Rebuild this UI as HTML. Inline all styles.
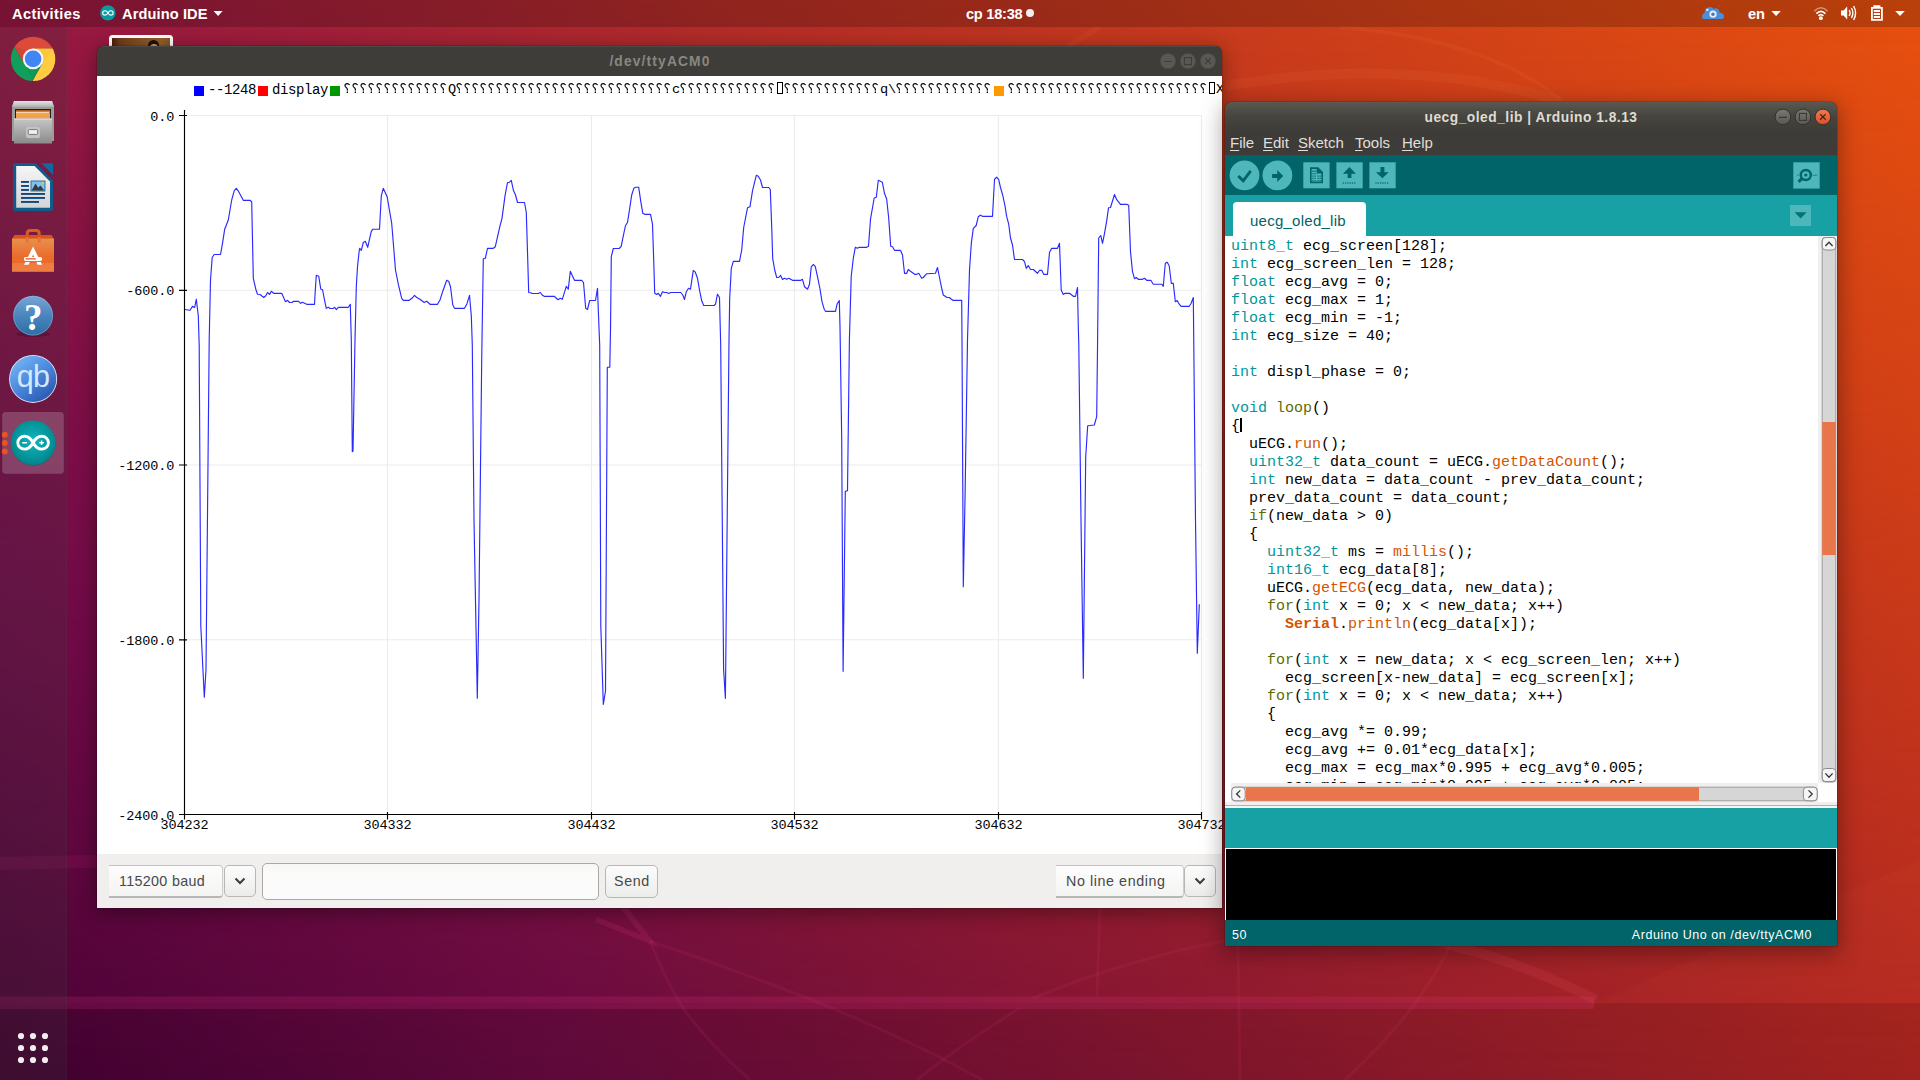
<!DOCTYPE html>
<html><head><meta charset="utf-8"><title>desktop</title>
<style>
*{box-sizing:border-box;margin:0;padding:0}
html,body{width:1920px;height:1080px;overflow:hidden;background:#7a0a44}
body{font-family:"Liberation Sans",sans-serif;position:relative}
.abs{position:absolute}
/* wallpaper */
#wp1{left:0;top:0;width:1920px;height:1080px;background:linear-gradient(to right,#981a3a 0%,#c03520 52%,#e8510e 100%)}
#wp2{left:0;top:0;width:1920px;height:1080px;background:linear-gradient(to right,#3c0128 0%,#660a3e 30%,#7e1236 52%,#b02622 100%);-webkit-mask-image:linear-gradient(to bottom,rgba(0,0,0,0) 0%,rgba(0,0,0,1) 100%);mask-image:linear-gradient(to bottom,rgba(0,0,0,0) 0%,rgba(0,0,0,1) 100%)}
/* top bar */
#topbar{left:0;top:0;width:1920px;height:27px;background:rgba(0,0,0,.2);color:#fff;font-weight:bold;font-size:14.6px;line-height:27px}
#dock{left:0;top:27px;width:67px;height:1053px;background:rgba(58,58,58,.22);border-right:1px solid rgba(110,110,110,.07)}
/* windows */
.win{box-shadow:0 4px 20px 1px rgba(0,0,0,.36),0 0 0 1px rgba(0,0,0,.12)}
#ard.win{box-shadow:0 5px 22px 2px rgba(0,0,0,.36),0 0 0 1px rgba(0,0,0,.14)}
.tbtn{width:16px;height:16px;border-radius:50%;}
/* plotter */
#plot{left:97px;top:46px;width:1125px;height:862px;background:#3e3d39;border-radius:7px 7px 0 0;overflow:hidden}
#plot .title{left:0;top:0;width:1126px;height:30px;background:#3e3d39;color:#8a8780;font-weight:bold;font-size:13.8px;line-height:30px;text-align:center;letter-spacing:1.15px;border-top:1px solid #4b4a46}
.lg{font-family:"Liberation Mono",monospace;font-size:13.6px;fill:#000}
.lgt{font-family:"Liberation Mono",monospace;font-size:14px;color:#000;line-height:16px;white-space:pre}
.ax{font-family:"Liberation Mono",monospace;font-size:13.5px;color:#000;white-space:pre;line-height:16px;letter-spacing:-.1px}
#bottom{left:0;top:808px;width:1125px;height:54px;background:#f0efed}
.gtxt{font-size:14.3px;color:#484848;white-space:pre}
/* arduino */
#ard{left:1225px;top:102px;width:612px;height:844px;background:#3d3c38;border-radius:7px 7px 0 0;overflow:hidden}
#ard .title{left:0;top:0;width:612px;height:30px;background:linear-gradient(to bottom,#5a5850 0%,#45443f 50%,#3d3c38 100%);color:#dfdbd2;font-weight:bold;font-size:13.8px;line-height:32px;text-align:center;letter-spacing:.5px}
#menubar{left:0;top:30px;width:612px;height:23px;background:#3d3c38;color:#e0dfdb;font-size:15px;line-height:22px}
#menubar span{position:absolute;top:0;white-space:pre}
#menubar u{text-decoration-thickness:1px;text-underline-offset:2px}
#toolbar{left:0;top:53px;width:612px;height:40px;background:#006468}
#tabs{left:0;top:93px;width:612px;height:41px;background:#17a1a5}
#tab{left:8px;top:7px;width:133px;height:34px;background:#fff;border-radius:4px 4px 0 0;color:#006468;font-size:15px;line-height:37.4px;padding-left:17px;white-space:pre;letter-spacing:.25px}
#editor{left:0;top:134px;width:612px;height:547px;background:#fff;overflow:hidden}
#code{left:6px;top:1.7px;font-family:"Liberation Mono",monospace;font-size:15px;line-height:18px;color:#000}
.ln{height:18px;white-space:pre}
.t{color:#00979c}.k{color:#5e6d03}.f{color:#d35400}.s{color:#d35400;font-weight:bold}
.tb{background:#4db7bb}
</style></head>
<body>
<div id="wp1" class="abs"></div><div id="wp2" class="abs"></div><div class="abs" style="left:0;top:0;width:1920px;height:1080px;background:radial-gradient(circle at 0px 560px,rgba(143,0,147,.25) 0,rgba(143,0,147,0) 900px)"></div>
<!-- wallpaper lines -->
<svg class="abs" style="left:0;top:0" width="1920" height="1080" viewBox="0 0 1920 1080">
 <rect x="0" y="1003" width="1920" height="77" fill="#000" fill-opacity=".085"/>
 <path d="M1595 1003 L1920 860 V1003 Z" fill="#ff8040" fill-opacity=".04"/>
 <g fill="none" stroke="#ff3c9c" stroke-opacity=".15">
  <path d="M0 1002.8 H1594" stroke-width="12.6"/>
  <path d="M1380 930 Q1500 950 1596 1000" stroke-width="10" stroke="#ff5a70" stroke-opacity=".12"/>
  <path d="M0 863.6 L97 861.2" stroke-width="13" stroke-opacity=".09"/>
 </g>
 <g fill="none" stroke="#ff4a90" stroke-opacity=".085" stroke-width="3">
  <path d="M596 919.5 L650 941 L622 906" stroke-width="5.5" stroke-opacity=".12"/>
  <path d="M650 941 Q668 985 683 1008 Q710 1045 750 1080"/>
  <path d="M650 941 Q730 968 807 998 Q900 1035 983 1080"/>
  <path d="M1020 1008 Q960 1045 917 1080"/>
  <path d="M1100 908 L1097 996"/>
  <path d="M1238 946 L1240 1080"/>
  <path d="M1450 946 Q1420 1010 1345 1080"/>
  <path d="M1033 998 Q1140 955 1240 938"/>
 </g>
 <g fill="none" stroke="#ff9a50" stroke-opacity=".075">
  <path d="M1225 86 Q1410 55 1560 101" stroke-width="10"/>
  <path d="M1340 27 Q1490 40 1562 101" stroke-width="4"/>
  <path d="M1100 27 L1020 75" stroke-width="5"/>
 </g>
</svg>
<!-- desktop thumbnail icon behind plotter -->
<div class="abs" style="left:109.3px;top:35px;width:63.6px;height:20px;background:#fff;border-radius:3.5px"></div>
<div class="abs" style="left:112.2px;top:38.1px;width:57.8px;height:14px;background:linear-gradient(to right,#4a200c 0%,#6e3b1a 12%,#80491e 35%,#8c5626 60%,#96602a 85%,#8a5424 100%)"></div>
<div class="abs" style="left:148.4px;top:40px;width:10.6px;height:9px;background:#1c140e;border-radius:5.3px 5.3px 0 0"></div>
<div class="abs" style="left:149.6px;top:44.4px;width:8px;height:4px;background:#e2a264;border-radius:4px 4px 0 0"></div>
<!-- ================= PLOTTER WINDOW ================= -->
<div id="plot" class="abs win">
 <div class="abs title">/dev/ttyACM0</div>
 <svg class="abs" style="left:1055px;top:0" width="70" height="30" viewBox="1152 46 70 30">
  <g fill="#595854" stroke="#45443f" stroke-width=".8"><circle cx="1168" cy="61.1" r="7.9"/><circle cx="1187.9" cy="61.1" r="7.9"/><circle cx="1208" cy="61.1" r="7.9"/></g>
  <g fill="none" stroke="#3e3d39" stroke-width="1.1"><path d="M1164 61.5 H1172"/><rect x="1184.4" y="57.6" width="7" height="7"/><path d="M1205.2 58.3 L1210.8 63.9 M1210.8 58.3 L1205.2 63.9"/></g>
 </svg>
 <div class="abs" style="left:0;top:30px;width:1125px;height:780px;background:#fff"></div>
 <div id="bottom" class="abs"></div>
</div>
<!-- plot contents in absolute screen coords -->
<div class="abs" style="left:194px;top:86px;width:10px;height:10px;background:#0000ff"></div>
<div class="abs lgt" style="left:208px;top:82px;letter-spacing:-.4px">--1248</div>
<div class="abs" style="left:258px;top:86px;width:10px;height:10px;background:#ff0000"></div>
<div class="abs lgt" style="left:272px;top:82px;letter-spacing:-.4px">display</div>
<div class="abs" style="left:330px;top:86px;width:10px;height:10px;background:#009900"></div>
<div class="abs" style="left:994px;top:86px;width:10px;height:10px;background:#ff9900"></div>
<svg class="abs" style="left:344px;top:82px" width="878" height="18" viewBox="0 0 878 18"><g fill="none" stroke="#000" stroke-width="1.15" stroke-linecap="round"><path d="M5.30 2.6 Q3.20 0.9 1.50 2.2 Q0.60 3.4 1.30 4.5 Q2.00 5.4 2.80 6.1 Q3.50 6.9 3.40 7.9" /><path d="M3.40 7.9 V9.4" stroke-opacity=".3"/><rect x="2.70" y="9.6" width="1.3" height="1.4" fill="#000" stroke="none"/><path d="M13.30 2.6 Q11.20 0.9 9.50 2.2 Q8.60 3.4 9.30 4.5 Q10.00 5.4 10.80 6.1 Q11.50 6.9 11.40 7.9" /><path d="M11.40 7.9 V9.4" stroke-opacity=".3"/><rect x="10.70" y="9.6" width="1.3" height="1.4" fill="#000" stroke="none"/><path d="M21.30 2.6 Q19.20 0.9 17.50 2.2 Q16.60 3.4 17.30 4.5 Q18.00 5.4 18.80 6.1 Q19.50 6.9 19.40 7.9" /><path d="M19.40 7.9 V9.4" stroke-opacity=".3"/><rect x="18.70" y="9.6" width="1.3" height="1.4" fill="#000" stroke="none"/><path d="M29.30 2.6 Q27.20 0.9 25.50 2.2 Q24.60 3.4 25.30 4.5 Q26.00 5.4 26.80 6.1 Q27.50 6.9 27.40 7.9" /><path d="M27.40 7.9 V9.4" stroke-opacity=".3"/><rect x="26.70" y="9.6" width="1.3" height="1.4" fill="#000" stroke="none"/><path d="M37.30 2.6 Q35.20 0.9 33.50 2.2 Q32.60 3.4 33.30 4.5 Q34.00 5.4 34.80 6.1 Q35.50 6.9 35.40 7.9" /><path d="M35.40 7.9 V9.4" stroke-opacity=".3"/><rect x="34.70" y="9.6" width="1.3" height="1.4" fill="#000" stroke="none"/><path d="M45.30 2.6 Q43.20 0.9 41.50 2.2 Q40.60 3.4 41.30 4.5 Q42.00 5.4 42.80 6.1 Q43.50 6.9 43.40 7.9" /><path d="M43.40 7.9 V9.4" stroke-opacity=".3"/><rect x="42.70" y="9.6" width="1.3" height="1.4" fill="#000" stroke="none"/><path d="M53.30 2.6 Q51.20 0.9 49.50 2.2 Q48.60 3.4 49.30 4.5 Q50.00 5.4 50.80 6.1 Q51.50 6.9 51.40 7.9" /><path d="M51.40 7.9 V9.4" stroke-opacity=".3"/><rect x="50.70" y="9.6" width="1.3" height="1.4" fill="#000" stroke="none"/><path d="M61.30 2.6 Q59.20 0.9 57.50 2.2 Q56.60 3.4 57.30 4.5 Q58.00 5.4 58.80 6.1 Q59.50 6.9 59.40 7.9" /><path d="M59.40 7.9 V9.4" stroke-opacity=".3"/><rect x="58.70" y="9.6" width="1.3" height="1.4" fill="#000" stroke="none"/><path d="M69.30 2.6 Q67.20 0.9 65.50 2.2 Q64.60 3.4 65.30 4.5 Q66.00 5.4 66.80 6.1 Q67.50 6.9 67.40 7.9" /><path d="M67.40 7.9 V9.4" stroke-opacity=".3"/><rect x="66.70" y="9.6" width="1.3" height="1.4" fill="#000" stroke="none"/><path d="M77.30 2.6 Q75.20 0.9 73.50 2.2 Q72.60 3.4 73.30 4.5 Q74.00 5.4 74.80 6.1 Q75.50 6.9 75.40 7.9" /><path d="M75.40 7.9 V9.4" stroke-opacity=".3"/><rect x="74.70" y="9.6" width="1.3" height="1.4" fill="#000" stroke="none"/><path d="M85.30 2.6 Q83.20 0.9 81.50 2.2 Q80.60 3.4 81.30 4.5 Q82.00 5.4 82.80 6.1 Q83.50 6.9 83.40 7.9" /><path d="M83.40 7.9 V9.4" stroke-opacity=".3"/><rect x="82.70" y="9.6" width="1.3" height="1.4" fill="#000" stroke="none"/><path d="M93.30 2.6 Q91.20 0.9 89.50 2.2 Q88.60 3.4 89.30 4.5 Q90.00 5.4 90.80 6.1 Q91.50 6.9 91.40 7.9" /><path d="M91.40 7.9 V9.4" stroke-opacity=".3"/><rect x="90.70" y="9.6" width="1.3" height="1.4" fill="#000" stroke="none"/><path d="M101.30 2.6 Q99.20 0.9 97.50 2.2 Q96.60 3.4 97.30 4.5 Q98.00 5.4 98.80 6.1 Q99.50 6.9 99.40 7.9" /><path d="M99.40 7.9 V9.4" stroke-opacity=".3"/><rect x="98.70" y="9.6" width="1.3" height="1.4" fill="#000" stroke="none"/><path d="M117.30 2.6 Q115.20 0.9 113.50 2.2 Q112.60 3.4 113.30 4.5 Q114.00 5.4 114.80 6.1 Q115.50 6.9 115.40 7.9" /><path d="M115.40 7.9 V9.4" stroke-opacity=".3"/><rect x="114.70" y="9.6" width="1.3" height="1.4" fill="#000" stroke="none"/><path d="M125.30 2.6 Q123.20 0.9 121.50 2.2 Q120.60 3.4 121.30 4.5 Q122.00 5.4 122.80 6.1 Q123.50 6.9 123.40 7.9" /><path d="M123.40 7.9 V9.4" stroke-opacity=".3"/><rect x="122.70" y="9.6" width="1.3" height="1.4" fill="#000" stroke="none"/><path d="M133.30 2.6 Q131.20 0.9 129.50 2.2 Q128.60 3.4 129.30 4.5 Q130.00 5.4 130.80 6.1 Q131.50 6.9 131.40 7.9" /><path d="M131.40 7.9 V9.4" stroke-opacity=".3"/><rect x="130.70" y="9.6" width="1.3" height="1.4" fill="#000" stroke="none"/><path d="M141.30 2.6 Q139.20 0.9 137.50 2.2 Q136.60 3.4 137.30 4.5 Q138.00 5.4 138.80 6.1 Q139.50 6.9 139.40 7.9" /><path d="M139.40 7.9 V9.4" stroke-opacity=".3"/><rect x="138.70" y="9.6" width="1.3" height="1.4" fill="#000" stroke="none"/><path d="M149.30 2.6 Q147.20 0.9 145.50 2.2 Q144.60 3.4 145.30 4.5 Q146.00 5.4 146.80 6.1 Q147.50 6.9 147.40 7.9" /><path d="M147.40 7.9 V9.4" stroke-opacity=".3"/><rect x="146.70" y="9.6" width="1.3" height="1.4" fill="#000" stroke="none"/><path d="M157.30 2.6 Q155.20 0.9 153.50 2.2 Q152.60 3.4 153.30 4.5 Q154.00 5.4 154.80 6.1 Q155.50 6.9 155.40 7.9" /><path d="M155.40 7.9 V9.4" stroke-opacity=".3"/><rect x="154.70" y="9.6" width="1.3" height="1.4" fill="#000" stroke="none"/><path d="M165.30 2.6 Q163.20 0.9 161.50 2.2 Q160.60 3.4 161.30 4.5 Q162.00 5.4 162.80 6.1 Q163.50 6.9 163.40 7.9" /><path d="M163.40 7.9 V9.4" stroke-opacity=".3"/><rect x="162.70" y="9.6" width="1.3" height="1.4" fill="#000" stroke="none"/><path d="M173.30 2.6 Q171.20 0.9 169.50 2.2 Q168.60 3.4 169.30 4.5 Q170.00 5.4 170.80 6.1 Q171.50 6.9 171.40 7.9" /><path d="M171.40 7.9 V9.4" stroke-opacity=".3"/><rect x="170.70" y="9.6" width="1.3" height="1.4" fill="#000" stroke="none"/><path d="M181.30 2.6 Q179.20 0.9 177.50 2.2 Q176.60 3.4 177.30 4.5 Q178.00 5.4 178.80 6.1 Q179.50 6.9 179.40 7.9" /><path d="M179.40 7.9 V9.4" stroke-opacity=".3"/><rect x="178.70" y="9.6" width="1.3" height="1.4" fill="#000" stroke="none"/><path d="M189.30 2.6 Q187.20 0.9 185.50 2.2 Q184.60 3.4 185.30 4.5 Q186.00 5.4 186.80 6.1 Q187.50 6.9 187.40 7.9" /><path d="M187.40 7.9 V9.4" stroke-opacity=".3"/><rect x="186.70" y="9.6" width="1.3" height="1.4" fill="#000" stroke="none"/><path d="M197.30 2.6 Q195.20 0.9 193.50 2.2 Q192.60 3.4 193.30 4.5 Q194.00 5.4 194.80 6.1 Q195.50 6.9 195.40 7.9" /><path d="M195.40 7.9 V9.4" stroke-opacity=".3"/><rect x="194.70" y="9.6" width="1.3" height="1.4" fill="#000" stroke="none"/><path d="M205.30 2.6 Q203.20 0.9 201.50 2.2 Q200.60 3.4 201.30 4.5 Q202.00 5.4 202.80 6.1 Q203.50 6.9 203.40 7.9" /><path d="M203.40 7.9 V9.4" stroke-opacity=".3"/><rect x="202.70" y="9.6" width="1.3" height="1.4" fill="#000" stroke="none"/><path d="M213.30 2.6 Q211.20 0.9 209.50 2.2 Q208.60 3.4 209.30 4.5 Q210.00 5.4 210.80 6.1 Q211.50 6.9 211.40 7.9" /><path d="M211.40 7.9 V9.4" stroke-opacity=".3"/><rect x="210.70" y="9.6" width="1.3" height="1.4" fill="#000" stroke="none"/><path d="M221.30 2.6 Q219.20 0.9 217.50 2.2 Q216.60 3.4 217.30 4.5 Q218.00 5.4 218.80 6.1 Q219.50 6.9 219.40 7.9" /><path d="M219.40 7.9 V9.4" stroke-opacity=".3"/><rect x="218.70" y="9.6" width="1.3" height="1.4" fill="#000" stroke="none"/><path d="M229.30 2.6 Q227.20 0.9 225.50 2.2 Q224.60 3.4 225.30 4.5 Q226.00 5.4 226.80 6.1 Q227.50 6.9 227.40 7.9" /><path d="M227.40 7.9 V9.4" stroke-opacity=".3"/><rect x="226.70" y="9.6" width="1.3" height="1.4" fill="#000" stroke="none"/><path d="M237.30 2.6 Q235.20 0.9 233.50 2.2 Q232.60 3.4 233.30 4.5 Q234.00 5.4 234.80 6.1 Q235.50 6.9 235.40 7.9" /><path d="M235.40 7.9 V9.4" stroke-opacity=".3"/><rect x="234.70" y="9.6" width="1.3" height="1.4" fill="#000" stroke="none"/><path d="M245.30 2.6 Q243.20 0.9 241.50 2.2 Q240.60 3.4 241.30 4.5 Q242.00 5.4 242.80 6.1 Q243.50 6.9 243.40 7.9" /><path d="M243.40 7.9 V9.4" stroke-opacity=".3"/><rect x="242.70" y="9.6" width="1.3" height="1.4" fill="#000" stroke="none"/><path d="M253.30 2.6 Q251.20 0.9 249.50 2.2 Q248.60 3.4 249.30 4.5 Q250.00 5.4 250.80 6.1 Q251.50 6.9 251.40 7.9" /><path d="M251.40 7.9 V9.4" stroke-opacity=".3"/><rect x="250.70" y="9.6" width="1.3" height="1.4" fill="#000" stroke="none"/><path d="M261.30 2.6 Q259.20 0.9 257.50 2.2 Q256.60 3.4 257.30 4.5 Q258.00 5.4 258.80 6.1 Q259.50 6.9 259.40 7.9" /><path d="M259.40 7.9 V9.4" stroke-opacity=".3"/><rect x="258.70" y="9.6" width="1.3" height="1.4" fill="#000" stroke="none"/><path d="M269.30 2.6 Q267.20 0.9 265.50 2.2 Q264.60 3.4 265.30 4.5 Q266.00 5.4 266.80 6.1 Q267.50 6.9 267.40 7.9" /><path d="M267.40 7.9 V9.4" stroke-opacity=".3"/><rect x="266.70" y="9.6" width="1.3" height="1.4" fill="#000" stroke="none"/><path d="M277.30 2.6 Q275.20 0.9 273.50 2.2 Q272.60 3.4 273.30 4.5 Q274.00 5.4 274.80 6.1 Q275.50 6.9 275.40 7.9" /><path d="M275.40 7.9 V9.4" stroke-opacity=".3"/><rect x="274.70" y="9.6" width="1.3" height="1.4" fill="#000" stroke="none"/><path d="M285.30 2.6 Q283.20 0.9 281.50 2.2 Q280.60 3.4 281.30 4.5 Q282.00 5.4 282.80 6.1 Q283.50 6.9 283.40 7.9" /><path d="M283.40 7.9 V9.4" stroke-opacity=".3"/><rect x="282.70" y="9.6" width="1.3" height="1.4" fill="#000" stroke="none"/><path d="M293.30 2.6 Q291.20 0.9 289.50 2.2 Q288.60 3.4 289.30 4.5 Q290.00 5.4 290.80 6.1 Q291.50 6.9 291.40 7.9" /><path d="M291.40 7.9 V9.4" stroke-opacity=".3"/><rect x="290.70" y="9.6" width="1.3" height="1.4" fill="#000" stroke="none"/><path d="M301.30 2.6 Q299.20 0.9 297.50 2.2 Q296.60 3.4 297.30 4.5 Q298.00 5.4 298.80 6.1 Q299.50 6.9 299.40 7.9" /><path d="M299.40 7.9 V9.4" stroke-opacity=".3"/><rect x="298.70" y="9.6" width="1.3" height="1.4" fill="#000" stroke="none"/><path d="M309.30 2.6 Q307.20 0.9 305.50 2.2 Q304.60 3.4 305.30 4.5 Q306.00 5.4 306.80 6.1 Q307.50 6.9 307.40 7.9" /><path d="M307.40 7.9 V9.4" stroke-opacity=".3"/><rect x="306.70" y="9.6" width="1.3" height="1.4" fill="#000" stroke="none"/><path d="M317.30 2.6 Q315.20 0.9 313.50 2.2 Q312.60 3.4 313.30 4.5 Q314.00 5.4 314.80 6.1 Q315.50 6.9 315.40 7.9" /><path d="M315.40 7.9 V9.4" stroke-opacity=".3"/><rect x="314.70" y="9.6" width="1.3" height="1.4" fill="#000" stroke="none"/><path d="M325.30 2.6 Q323.20 0.9 321.50 2.2 Q320.60 3.4 321.30 4.5 Q322.00 5.4 322.80 6.1 Q323.50 6.9 323.40 7.9" /><path d="M323.40 7.9 V9.4" stroke-opacity=".3"/><rect x="322.70" y="9.6" width="1.3" height="1.4" fill="#000" stroke="none"/><path d="M341.30 2.6 Q339.20 0.9 337.50 2.2 Q336.60 3.4 337.30 4.5 Q338.00 5.4 338.80 6.1 Q339.50 6.9 339.40 7.9" /><path d="M339.40 7.9 V9.4" stroke-opacity=".3"/><rect x="338.70" y="9.6" width="1.3" height="1.4" fill="#000" stroke="none"/><path d="M349.30 2.6 Q347.20 0.9 345.50 2.2 Q344.60 3.4 345.30 4.5 Q346.00 5.4 346.80 6.1 Q347.50 6.9 347.40 7.9" /><path d="M347.40 7.9 V9.4" stroke-opacity=".3"/><rect x="346.70" y="9.6" width="1.3" height="1.4" fill="#000" stroke="none"/><path d="M357.30 2.6 Q355.20 0.9 353.50 2.2 Q352.60 3.4 353.30 4.5 Q354.00 5.4 354.80 6.1 Q355.50 6.9 355.40 7.9" /><path d="M355.40 7.9 V9.4" stroke-opacity=".3"/><rect x="354.70" y="9.6" width="1.3" height="1.4" fill="#000" stroke="none"/><path d="M365.30 2.6 Q363.20 0.9 361.50 2.2 Q360.60 3.4 361.30 4.5 Q362.00 5.4 362.80 6.1 Q363.50 6.9 363.40 7.9" /><path d="M363.40 7.9 V9.4" stroke-opacity=".3"/><rect x="362.70" y="9.6" width="1.3" height="1.4" fill="#000" stroke="none"/><path d="M373.30 2.6 Q371.20 0.9 369.50 2.2 Q368.60 3.4 369.30 4.5 Q370.00 5.4 370.80 6.1 Q371.50 6.9 371.40 7.9" /><path d="M371.40 7.9 V9.4" stroke-opacity=".3"/><rect x="370.70" y="9.6" width="1.3" height="1.4" fill="#000" stroke="none"/><path d="M381.30 2.6 Q379.20 0.9 377.50 2.2 Q376.60 3.4 377.30 4.5 Q378.00 5.4 378.80 6.1 Q379.50 6.9 379.40 7.9" /><path d="M379.40 7.9 V9.4" stroke-opacity=".3"/><rect x="378.70" y="9.6" width="1.3" height="1.4" fill="#000" stroke="none"/><path d="M389.30 2.6 Q387.20 0.9 385.50 2.2 Q384.60 3.4 385.30 4.5 Q386.00 5.4 386.80 6.1 Q387.50 6.9 387.40 7.9" /><path d="M387.40 7.9 V9.4" stroke-opacity=".3"/><rect x="386.70" y="9.6" width="1.3" height="1.4" fill="#000" stroke="none"/><path d="M397.30 2.6 Q395.20 0.9 393.50 2.2 Q392.60 3.4 393.30 4.5 Q394.00 5.4 394.80 6.1 Q395.50 6.9 395.40 7.9" /><path d="M395.40 7.9 V9.4" stroke-opacity=".3"/><rect x="394.70" y="9.6" width="1.3" height="1.4" fill="#000" stroke="none"/><path d="M405.30 2.6 Q403.20 0.9 401.50 2.2 Q400.60 3.4 401.30 4.5 Q402.00 5.4 402.80 6.1 Q403.50 6.9 403.40 7.9" /><path d="M403.40 7.9 V9.4" stroke-opacity=".3"/><rect x="402.70" y="9.6" width="1.3" height="1.4" fill="#000" stroke="none"/><path d="M413.30 2.6 Q411.20 0.9 409.50 2.2 Q408.60 3.4 409.30 4.5 Q410.00 5.4 410.80 6.1 Q411.50 6.9 411.40 7.9" /><path d="M411.40 7.9 V9.4" stroke-opacity=".3"/><rect x="410.70" y="9.6" width="1.3" height="1.4" fill="#000" stroke="none"/><path d="M421.30 2.6 Q419.20 0.9 417.50 2.2 Q416.60 3.4 417.30 4.5 Q418.00 5.4 418.80 6.1 Q419.50 6.9 419.40 7.9" /><path d="M419.40 7.9 V9.4" stroke-opacity=".3"/><rect x="418.70" y="9.6" width="1.3" height="1.4" fill="#000" stroke="none"/><path d="M429.30 2.6 Q427.20 0.9 425.50 2.2 Q424.60 3.4 425.30 4.5 Q426.00 5.4 426.80 6.1 Q427.50 6.9 427.40 7.9" /><path d="M427.40 7.9 V9.4" stroke-opacity=".3"/><rect x="426.70" y="9.6" width="1.3" height="1.4" fill="#000" stroke="none"/><rect x="433.5" y="0.5" width="5" height="11" fill="none" stroke="#000" stroke-width="1"/><path d="M445.30 2.6 Q443.20 0.9 441.50 2.2 Q440.60 3.4 441.30 4.5 Q442.00 5.4 442.80 6.1 Q443.50 6.9 443.40 7.9" /><path d="M443.40 7.9 V9.4" stroke-opacity=".3"/><rect x="442.70" y="9.6" width="1.3" height="1.4" fill="#000" stroke="none"/><path d="M453.30 2.6 Q451.20 0.9 449.50 2.2 Q448.60 3.4 449.30 4.5 Q450.00 5.4 450.80 6.1 Q451.50 6.9 451.40 7.9" /><path d="M451.40 7.9 V9.4" stroke-opacity=".3"/><rect x="450.70" y="9.6" width="1.3" height="1.4" fill="#000" stroke="none"/><path d="M461.30 2.6 Q459.20 0.9 457.50 2.2 Q456.60 3.4 457.30 4.5 Q458.00 5.4 458.80 6.1 Q459.50 6.9 459.40 7.9" /><path d="M459.40 7.9 V9.4" stroke-opacity=".3"/><rect x="458.70" y="9.6" width="1.3" height="1.4" fill="#000" stroke="none"/><path d="M469.30 2.6 Q467.20 0.9 465.50 2.2 Q464.60 3.4 465.30 4.5 Q466.00 5.4 466.80 6.1 Q467.50 6.9 467.40 7.9" /><path d="M467.40 7.9 V9.4" stroke-opacity=".3"/><rect x="466.70" y="9.6" width="1.3" height="1.4" fill="#000" stroke="none"/><path d="M477.30 2.6 Q475.20 0.9 473.50 2.2 Q472.60 3.4 473.30 4.5 Q474.00 5.4 474.80 6.1 Q475.50 6.9 475.40 7.9" /><path d="M475.40 7.9 V9.4" stroke-opacity=".3"/><rect x="474.70" y="9.6" width="1.3" height="1.4" fill="#000" stroke="none"/><path d="M485.30 2.6 Q483.20 0.9 481.50 2.2 Q480.60 3.4 481.30 4.5 Q482.00 5.4 482.80 6.1 Q483.50 6.9 483.40 7.9" /><path d="M483.40 7.9 V9.4" stroke-opacity=".3"/><rect x="482.70" y="9.6" width="1.3" height="1.4" fill="#000" stroke="none"/><path d="M493.30 2.6 Q491.20 0.9 489.50 2.2 Q488.60 3.4 489.30 4.5 Q490.00 5.4 490.80 6.1 Q491.50 6.9 491.40 7.9" /><path d="M491.40 7.9 V9.4" stroke-opacity=".3"/><rect x="490.70" y="9.6" width="1.3" height="1.4" fill="#000" stroke="none"/><path d="M501.30 2.6 Q499.20 0.9 497.50 2.2 Q496.60 3.4 497.30 4.5 Q498.00 5.4 498.80 6.1 Q499.50 6.9 499.40 7.9" /><path d="M499.40 7.9 V9.4" stroke-opacity=".3"/><rect x="498.70" y="9.6" width="1.3" height="1.4" fill="#000" stroke="none"/><path d="M509.30 2.6 Q507.20 0.9 505.50 2.2 Q504.60 3.4 505.30 4.5 Q506.00 5.4 506.80 6.1 Q507.50 6.9 507.40 7.9" /><path d="M507.40 7.9 V9.4" stroke-opacity=".3"/><rect x="506.70" y="9.6" width="1.3" height="1.4" fill="#000" stroke="none"/><path d="M517.30 2.6 Q515.20 0.9 513.50 2.2 Q512.60 3.4 513.30 4.5 Q514.00 5.4 514.80 6.1 Q515.50 6.9 515.40 7.9" /><path d="M515.40 7.9 V9.4" stroke-opacity=".3"/><rect x="514.70" y="9.6" width="1.3" height="1.4" fill="#000" stroke="none"/><path d="M525.30 2.6 Q523.20 0.9 521.50 2.2 Q520.60 3.4 521.30 4.5 Q522.00 5.4 522.80 6.1 Q523.50 6.9 523.40 7.9" /><path d="M523.40 7.9 V9.4" stroke-opacity=".3"/><rect x="522.70" y="9.6" width="1.3" height="1.4" fill="#000" stroke="none"/><path d="M533.30 2.6 Q531.20 0.9 529.50 2.2 Q528.60 3.4 529.30 4.5 Q530.00 5.4 530.80 6.1 Q531.50 6.9 531.40 7.9" /><path d="M531.40 7.9 V9.4" stroke-opacity=".3"/><rect x="530.70" y="9.6" width="1.3" height="1.4" fill="#000" stroke="none"/><path d="M557.30 2.6 Q555.20 0.9 553.50 2.2 Q552.60 3.4 553.30 4.5 Q554.00 5.4 554.80 6.1 Q555.50 6.9 555.40 7.9" /><path d="M555.40 7.9 V9.4" stroke-opacity=".3"/><rect x="554.70" y="9.6" width="1.3" height="1.4" fill="#000" stroke="none"/><path d="M565.30 2.6 Q563.20 0.9 561.50 2.2 Q560.60 3.4 561.30 4.5 Q562.00 5.4 562.80 6.1 Q563.50 6.9 563.40 7.9" /><path d="M563.40 7.9 V9.4" stroke-opacity=".3"/><rect x="562.70" y="9.6" width="1.3" height="1.4" fill="#000" stroke="none"/><path d="M573.30 2.6 Q571.20 0.9 569.50 2.2 Q568.60 3.4 569.30 4.5 Q570.00 5.4 570.80 6.1 Q571.50 6.9 571.40 7.9" /><path d="M571.40 7.9 V9.4" stroke-opacity=".3"/><rect x="570.70" y="9.6" width="1.3" height="1.4" fill="#000" stroke="none"/><path d="M581.30 2.6 Q579.20 0.9 577.50 2.2 Q576.60 3.4 577.30 4.5 Q578.00 5.4 578.80 6.1 Q579.50 6.9 579.40 7.9" /><path d="M579.40 7.9 V9.4" stroke-opacity=".3"/><rect x="578.70" y="9.6" width="1.3" height="1.4" fill="#000" stroke="none"/><path d="M589.30 2.6 Q587.20 0.9 585.50 2.2 Q584.60 3.4 585.30 4.5 Q586.00 5.4 586.80 6.1 Q587.50 6.9 587.40 7.9" /><path d="M587.40 7.9 V9.4" stroke-opacity=".3"/><rect x="586.70" y="9.6" width="1.3" height="1.4" fill="#000" stroke="none"/><path d="M597.30 2.6 Q595.20 0.9 593.50 2.2 Q592.60 3.4 593.30 4.5 Q594.00 5.4 594.80 6.1 Q595.50 6.9 595.40 7.9" /><path d="M595.40 7.9 V9.4" stroke-opacity=".3"/><rect x="594.70" y="9.6" width="1.3" height="1.4" fill="#000" stroke="none"/><path d="M605.30 2.6 Q603.20 0.9 601.50 2.2 Q600.60 3.4 601.30 4.5 Q602.00 5.4 602.80 6.1 Q603.50 6.9 603.40 7.9" /><path d="M603.40 7.9 V9.4" stroke-opacity=".3"/><rect x="602.70" y="9.6" width="1.3" height="1.4" fill="#000" stroke="none"/><path d="M613.30 2.6 Q611.20 0.9 609.50 2.2 Q608.60 3.4 609.30 4.5 Q610.00 5.4 610.80 6.1 Q611.50 6.9 611.40 7.9" /><path d="M611.40 7.9 V9.4" stroke-opacity=".3"/><rect x="610.70" y="9.6" width="1.3" height="1.4" fill="#000" stroke="none"/><path d="M621.30 2.6 Q619.20 0.9 617.50 2.2 Q616.60 3.4 617.30 4.5 Q618.00 5.4 618.80 6.1 Q619.50 6.9 619.40 7.9" /><path d="M619.40 7.9 V9.4" stroke-opacity=".3"/><rect x="618.70" y="9.6" width="1.3" height="1.4" fill="#000" stroke="none"/><path d="M629.30 2.6 Q627.20 0.9 625.50 2.2 Q624.60 3.4 625.30 4.5 Q626.00 5.4 626.80 6.1 Q627.50 6.9 627.40 7.9" /><path d="M627.40 7.9 V9.4" stroke-opacity=".3"/><rect x="626.70" y="9.6" width="1.3" height="1.4" fill="#000" stroke="none"/><path d="M637.30 2.6 Q635.20 0.9 633.50 2.2 Q632.60 3.4 633.30 4.5 Q634.00 5.4 634.80 6.1 Q635.50 6.9 635.40 7.9" /><path d="M635.40 7.9 V9.4" stroke-opacity=".3"/><rect x="634.70" y="9.6" width="1.3" height="1.4" fill="#000" stroke="none"/><path d="M645.30 2.6 Q643.20 0.9 641.50 2.2 Q640.60 3.4 641.30 4.5 Q642.00 5.4 642.80 6.1 Q643.50 6.9 643.40 7.9" /><path d="M643.40 7.9 V9.4" stroke-opacity=".3"/><rect x="642.70" y="9.6" width="1.3" height="1.4" fill="#000" stroke="none"/><path d="M669.30 2.6 Q667.20 0.9 665.50 2.2 Q664.60 3.4 665.30 4.5 Q666.00 5.4 666.80 6.1 Q667.50 6.9 667.40 7.9" /><path d="M667.40 7.9 V9.4" stroke-opacity=".3"/><rect x="666.70" y="9.6" width="1.3" height="1.4" fill="#000" stroke="none"/><path d="M677.30 2.6 Q675.20 0.9 673.50 2.2 Q672.60 3.4 673.30 4.5 Q674.00 5.4 674.80 6.1 Q675.50 6.9 675.40 7.9" /><path d="M675.40 7.9 V9.4" stroke-opacity=".3"/><rect x="674.70" y="9.6" width="1.3" height="1.4" fill="#000" stroke="none"/><path d="M685.30 2.6 Q683.20 0.9 681.50 2.2 Q680.60 3.4 681.30 4.5 Q682.00 5.4 682.80 6.1 Q683.50 6.9 683.40 7.9" /><path d="M683.40 7.9 V9.4" stroke-opacity=".3"/><rect x="682.70" y="9.6" width="1.3" height="1.4" fill="#000" stroke="none"/><path d="M693.30 2.6 Q691.20 0.9 689.50 2.2 Q688.60 3.4 689.30 4.5 Q690.00 5.4 690.80 6.1 Q691.50 6.9 691.40 7.9" /><path d="M691.40 7.9 V9.4" stroke-opacity=".3"/><rect x="690.70" y="9.6" width="1.3" height="1.4" fill="#000" stroke="none"/><path d="M701.30 2.6 Q699.20 0.9 697.50 2.2 Q696.60 3.4 697.30 4.5 Q698.00 5.4 698.80 6.1 Q699.50 6.9 699.40 7.9" /><path d="M699.40 7.9 V9.4" stroke-opacity=".3"/><rect x="698.70" y="9.6" width="1.3" height="1.4" fill="#000" stroke="none"/><path d="M709.30 2.6 Q707.20 0.9 705.50 2.2 Q704.60 3.4 705.30 4.5 Q706.00 5.4 706.80 6.1 Q707.50 6.9 707.40 7.9" /><path d="M707.40 7.9 V9.4" stroke-opacity=".3"/><rect x="706.70" y="9.6" width="1.3" height="1.4" fill="#000" stroke="none"/><path d="M717.30 2.6 Q715.20 0.9 713.50 2.2 Q712.60 3.4 713.30 4.5 Q714.00 5.4 714.80 6.1 Q715.50 6.9 715.40 7.9" /><path d="M715.40 7.9 V9.4" stroke-opacity=".3"/><rect x="714.70" y="9.6" width="1.3" height="1.4" fill="#000" stroke="none"/><path d="M725.30 2.6 Q723.20 0.9 721.50 2.2 Q720.60 3.4 721.30 4.5 Q722.00 5.4 722.80 6.1 Q723.50 6.9 723.40 7.9" /><path d="M723.40 7.9 V9.4" stroke-opacity=".3"/><rect x="722.70" y="9.6" width="1.3" height="1.4" fill="#000" stroke="none"/><path d="M733.30 2.6 Q731.20 0.9 729.50 2.2 Q728.60 3.4 729.30 4.5 Q730.00 5.4 730.80 6.1 Q731.50 6.9 731.40 7.9" /><path d="M731.40 7.9 V9.4" stroke-opacity=".3"/><rect x="730.70" y="9.6" width="1.3" height="1.4" fill="#000" stroke="none"/><path d="M741.30 2.6 Q739.20 0.9 737.50 2.2 Q736.60 3.4 737.30 4.5 Q738.00 5.4 738.80 6.1 Q739.50 6.9 739.40 7.9" /><path d="M739.40 7.9 V9.4" stroke-opacity=".3"/><rect x="738.70" y="9.6" width="1.3" height="1.4" fill="#000" stroke="none"/><path d="M749.30 2.6 Q747.20 0.9 745.50 2.2 Q744.60 3.4 745.30 4.5 Q746.00 5.4 746.80 6.1 Q747.50 6.9 747.40 7.9" /><path d="M747.40 7.9 V9.4" stroke-opacity=".3"/><rect x="746.70" y="9.6" width="1.3" height="1.4" fill="#000" stroke="none"/><path d="M757.30 2.6 Q755.20 0.9 753.50 2.2 Q752.60 3.4 753.30 4.5 Q754.00 5.4 754.80 6.1 Q755.50 6.9 755.40 7.9" /><path d="M755.40 7.9 V9.4" stroke-opacity=".3"/><rect x="754.70" y="9.6" width="1.3" height="1.4" fill="#000" stroke="none"/><path d="M765.30 2.6 Q763.20 0.9 761.50 2.2 Q760.60 3.4 761.30 4.5 Q762.00 5.4 762.80 6.1 Q763.50 6.9 763.40 7.9" /><path d="M763.40 7.9 V9.4" stroke-opacity=".3"/><rect x="762.70" y="9.6" width="1.3" height="1.4" fill="#000" stroke="none"/><path d="M773.30 2.6 Q771.20 0.9 769.50 2.2 Q768.60 3.4 769.30 4.5 Q770.00 5.4 770.80 6.1 Q771.50 6.9 771.40 7.9" /><path d="M771.40 7.9 V9.4" stroke-opacity=".3"/><rect x="770.70" y="9.6" width="1.3" height="1.4" fill="#000" stroke="none"/><path d="M781.30 2.6 Q779.20 0.9 777.50 2.2 Q776.60 3.4 777.30 4.5 Q778.00 5.4 778.80 6.1 Q779.50 6.9 779.40 7.9" /><path d="M779.40 7.9 V9.4" stroke-opacity=".3"/><rect x="778.70" y="9.6" width="1.3" height="1.4" fill="#000" stroke="none"/><path d="M789.30 2.6 Q787.20 0.9 785.50 2.2 Q784.60 3.4 785.30 4.5 Q786.00 5.4 786.80 6.1 Q787.50 6.9 787.40 7.9" /><path d="M787.40 7.9 V9.4" stroke-opacity=".3"/><rect x="786.70" y="9.6" width="1.3" height="1.4" fill="#000" stroke="none"/><path d="M797.30 2.6 Q795.20 0.9 793.50 2.2 Q792.60 3.4 793.30 4.5 Q794.00 5.4 794.80 6.1 Q795.50 6.9 795.40 7.9" /><path d="M795.40 7.9 V9.4" stroke-opacity=".3"/><rect x="794.70" y="9.6" width="1.3" height="1.4" fill="#000" stroke="none"/><path d="M805.30 2.6 Q803.20 0.9 801.50 2.2 Q800.60 3.4 801.30 4.5 Q802.00 5.4 802.80 6.1 Q803.50 6.9 803.40 7.9" /><path d="M803.40 7.9 V9.4" stroke-opacity=".3"/><rect x="802.70" y="9.6" width="1.3" height="1.4" fill="#000" stroke="none"/><path d="M813.30 2.6 Q811.20 0.9 809.50 2.2 Q808.60 3.4 809.30 4.5 Q810.00 5.4 810.80 6.1 Q811.50 6.9 811.40 7.9" /><path d="M811.40 7.9 V9.4" stroke-opacity=".3"/><rect x="810.70" y="9.6" width="1.3" height="1.4" fill="#000" stroke="none"/><path d="M821.30 2.6 Q819.20 0.9 817.50 2.2 Q816.60 3.4 817.30 4.5 Q818.00 5.4 818.80 6.1 Q819.50 6.9 819.40 7.9" /><path d="M819.40 7.9 V9.4" stroke-opacity=".3"/><rect x="818.70" y="9.6" width="1.3" height="1.4" fill="#000" stroke="none"/><path d="M829.30 2.6 Q827.20 0.9 825.50 2.2 Q824.60 3.4 825.30 4.5 Q826.00 5.4 826.80 6.1 Q827.50 6.9 827.40 7.9" /><path d="M827.40 7.9 V9.4" stroke-opacity=".3"/><rect x="826.70" y="9.6" width="1.3" height="1.4" fill="#000" stroke="none"/><path d="M837.30 2.6 Q835.20 0.9 833.50 2.2 Q832.60 3.4 833.30 4.5 Q834.00 5.4 834.80 6.1 Q835.50 6.9 835.40 7.9" /><path d="M835.40 7.9 V9.4" stroke-opacity=".3"/><rect x="834.70" y="9.6" width="1.3" height="1.4" fill="#000" stroke="none"/><path d="M845.30 2.6 Q843.20 0.9 841.50 2.2 Q840.60 3.4 841.30 4.5 Q842.00 5.4 842.80 6.1 Q843.50 6.9 843.40 7.9" /><path d="M843.40 7.9 V9.4" stroke-opacity=".3"/><rect x="842.70" y="9.6" width="1.3" height="1.4" fill="#000" stroke="none"/><path d="M853.30 2.6 Q851.20 0.9 849.50 2.2 Q848.60 3.4 849.30 4.5 Q850.00 5.4 850.80 6.1 Q851.50 6.9 851.40 7.9" /><path d="M851.40 7.9 V9.4" stroke-opacity=".3"/><rect x="850.70" y="9.6" width="1.3" height="1.4" fill="#000" stroke="none"/><path d="M861.30 2.6 Q859.20 0.9 857.50 2.2 Q856.60 3.4 857.30 4.5 Q858.00 5.4 858.80 6.1 Q859.50 6.9 859.40 7.9" /><path d="M859.40 7.9 V9.4" stroke-opacity=".3"/><rect x="858.70" y="9.6" width="1.3" height="1.4" fill="#000" stroke="none"/><rect x="865.5" y="0.5" width="5" height="11" fill="none" stroke="#000" stroke-width="1"/></g><text x="104.0" y="11" class="lg">Q</text><text x="328.0" y="11" class="lg">c</text><text x="536.0" y="11" class="lg">q</text><text x="544.0" y="11" class="lg">\</text><text x="872.0" y="11" class="lg">X</text></svg>
<svg class="abs" style="left:97px;top:76px" width="1125" height="778" viewBox="97 76 1125 778" shape-rendering="auto">
 <g stroke="#ececec" stroke-width="1.1" fill="none">
  <path d="M185 115.5 H1202 M185 290.3 H1202 M185 465 H1202 M185 639.8 H1202"/>
  <path d="M387.5 116 V812 M591.5 116 V812 M794.5 116 V812 M998.5 116 V812 M1201.5 116 V812"/>
 </g>
 <path d="M184.7 309.5 L190.0 310.3 L192.5 306.3 L194.7 307.5 L196.3 299.2 L198.3 315.8 L199.2 345.0 L200.8 626.0 L204.3 697.3 L206.0 670.0 L209.0 360.0 L209.2 340.0 L210.5 280.0 L212.2 257.5 L214.2 254.5 L220.5 254.5 L222.5 243.3 L224.7 229.2 L228.3 220.0 L231.7 200.0 L234.2 190.8 L236.3 188.3 L238.7 191.7 L243.3 200.3 L250.0 200.3 L251.7 201.7 L252.5 240.0 L253.3 278.3 L255.8 289.2 L257.5 294.2 L260.0 294.5 L263.8 297.5 L265.8 295.8 L267.5 292.5 L269.7 294.5 L271.3 291.3 L273.7 293.3 L281.7 293.3 L285.5 301.7 L287.5 300.3 L289.5 302.5 L292.0 302.5 L293.3 301.3 L298.7 301.3 L300.7 303.3 L302.5 302.2 L306.7 304.3 L314.5 304.3 L315.3 290.0 L316.3 275.3 L318.7 276.2 L320.8 289.2 L322.5 289.5 L324.7 300.8 L326.3 308.3 L328.3 307.3 L330.0 308.5 L333.0 308.5 L334.7 307.3 L336.3 309.7 L338.3 307.3 L348.3 307.3 L350.3 304.3 L351.3 340.0 L352.3 451.7 L353.0 451.0 L355.0 340.0 L356.3 286.7 L357.5 266.7 L359.2 250.8 L359.7 248.3 L361.3 250.3 L363.3 242.5 L365.3 241.3 L367.7 247.3 L371.3 231.3 L372.8 229.2 L379.5 229.2 L381.3 195.8 L383.3 188.3 L387.2 197.0 L391.7 223.3 L395.5 270.0 L398.3 284.2 L401.7 298.3 L403.3 300.3 L409.2 300.3 L412.0 298.3 L414.5 295.3 L416.7 297.5 L420.0 299.2 L424.2 302.5 L426.7 301.3 L430.0 304.3 L437.5 304.3 L440.0 300.0 L442.8 291.2 L446.7 280.3 L448.7 281.2 L450.5 286.7 L452.8 305.0 L454.5 308.3 L464.5 308.3 L467.0 303.7 L469.5 295.3 L471.3 315.8 L472.3 345.0 L474.0 520.0 L477.3 698.3 L479.0 600.0 L481.7 360.0 L482.0 340.0 L483.3 258.7 L485.3 258.3 L487.5 248.3 L493.3 248.3 L495.3 246.7 L500.0 225.8 L502.0 218.3 L505.0 195.8 L507.5 182.5 L509.5 182.2 L511.3 180.3 L513.3 190.0 L515.5 195.0 L517.5 202.5 L524.5 202.5 L526.3 212.5 L527.5 251.7 L528.7 292.5 L530.8 292.8 L532.2 293.5 L538.3 293.5 L540.3 292.5 L542.5 295.3 L544.2 296.3 L554.2 296.3 L558.0 299.7 L560.3 298.3 L562.3 299.3 L566.3 286.3 L568.3 289.2 L570.3 271.3 L574.5 280.3 L581.7 280.3 L583.5 282.5 L585.7 308.3 L587.5 309.5 L589.7 300.5 L595.5 300.5 L597.5 288.3 L598.3 310.0 L599.7 345.0 L600.8 626.0 L603.3 704.5 L605.5 691.0 L607.3 367.2 L609.8 367.2 L610.5 330.0 L611.3 256.7 L613.3 248.5 L619.2 248.5 L621.2 246.3 L623.3 235.8 L625.5 225.5 L627.5 222.5 L629.7 208.3 L631.7 195.0 L633.8 188.3 L635.8 187.2 L638.7 187.2 L640.8 201.7 L642.8 213.3 L644.7 214.3 L650.5 214.3 L652.5 224.2 L653.7 260.0 L654.7 293.3 L656.7 294.5 L658.3 293.3 L660.5 296.3 L662.5 291.7 L664.5 292.5 L666.7 292.5 L668.7 293.5 L670.7 292.5 L680.8 292.5 L682.8 295.0 L684.5 299.5 L686.3 291.7 L688.5 288.3 L690.5 289.2 L693.3 270.3 L695.3 272.2 L697.5 278.3 L699.5 290.0 L701.7 300.8 L703.7 305.5 L714.2 305.5 L715.5 304.2 L717.5 294.2 L719.5 297.5 L720.0 318.3 L720.7 345.0 L723.6 669.5 L725.4 698.4 L729.0 340.0 L729.7 298.3 L731.3 268.3 L733.3 261.3 L739.5 261.3 L741.7 250.0 L743.7 227.5 L747.5 207.8 L750.0 206.7 L752.5 190.8 L756.3 175.3 L758.3 176.2 L760.5 180.0 L762.5 187.5 L768.7 187.5 L770.3 189.5 L771.7 226.7 L772.7 258.3 L774.7 270.0 L776.7 277.5 L778.7 277.5 L780.5 275.3 L782.5 279.5 L784.5 278.3 L786.7 279.3 L788.7 278.3 L792.5 280.3 L800.8 280.3 L802.5 279.3 L804.5 286.7 L807.5 289.2 L809.5 284.2 L811.3 266.7 L813.5 264.5 L815.3 266.7 L817.5 276.7 L820.0 289.0 L822.0 301.7 L824.2 309.2 L825.5 311.3 L835.5 311.3 L837.2 303.7 L839.3 300.5 L840.0 326.7 L840.3 345.0 L841.7 438.0 L843.1 671.3 L845.3 491.4 L847.5 490.7 L849.4 340.0 L851.2 276.7 L853.3 258.3 L855.3 247.3 L857.3 248.3 L859.3 247.3 L866.7 247.3 L868.5 246.3 L870.5 219.2 L874.2 198.0 L876.3 197.3 L878.3 180.3 L882.3 182.2 L884.5 193.3 L886.7 199.2 L888.7 218.3 L890.7 246.3 L892.5 246.7 L894.5 250.3 L900.5 250.3 L902.5 255.0 L904.5 273.3 L906.7 273.3 L908.3 269.5 L910.5 271.3 L914.7 274.3 L916.7 274.3 L918.7 273.3 L921.7 278.3 L923.3 277.5 L926.7 273.7 L935.5 273.3 L937.5 267.5 L939.5 277.5 L941.7 288.3 L943.3 295.0 L947.0 297.5 L949.2 297.5 L952.8 300.3 L961.7 300.3 L962.0 340.0 L963.3 586.7 L965.0 500.0 L967.5 340.0 L969.5 270.0 L971.3 243.3 L973.3 228.3 L976.2 225.5 L978.3 216.7 L980.3 215.2 L982.5 216.3 L992.5 216.3 L994.5 179.2 L996.7 177.2 L998.7 179.7 L1000.5 187.5 L1002.8 195.5 L1005.0 205.8 L1006.7 216.7 L1008.7 224.2 L1010.5 238.0 L1012.5 245.0 L1014.5 259.5 L1022.5 259.5 L1024.5 261.7 L1026.3 268.3 L1028.3 265.5 L1030.5 269.5 L1033.3 269.5 L1037.5 273.3 L1039.5 270.3 L1041.7 270.3 L1043.7 274.3 L1047.5 274.3 L1049.5 252.5 L1051.7 248.3 L1057.5 248.3 L1059.5 243.3 L1061.2 290.0 L1063.3 294.5 L1065.0 293.3 L1069.5 293.3 L1073.3 296.3 L1075.5 296.3 L1077.5 287.5 L1078.3 326.7 L1078.8 345.0 L1081.0 520.0 L1083.3 678.3 L1085.7 456.7 L1087.7 425.7 L1094.3 425.0 L1096.7 416.7 L1097.6 340.0 L1098.7 238.0 L1100.8 235.5 L1102.5 243.3 L1104.5 233.3 L1106.7 220.8 L1108.5 207.8 L1110.5 207.5 L1114.5 194.5 L1116.7 199.7 L1120.5 204.3 L1126.7 204.3 L1128.7 205.3 L1130.5 251.7 L1132.5 271.7 L1134.5 278.7 L1136.3 277.5 L1138.3 279.3 L1142.5 279.3 L1144.5 278.3 L1146.7 280.3 L1150.8 280.3 L1153.3 284.2 L1161.7 284.2 L1163.3 286.3 L1165.3 263.3 L1167.2 262.2 L1169.2 265.8 L1171.3 283.3 L1173.3 283.3 L1175.3 301.7 L1177.2 300.5 L1179.2 304.2 L1181.2 306.3 L1189.2 306.3 L1191.2 303.3 L1193.3 297.5 L1193.8 345.0 L1195.5 520.0 L1197.3 653.3 L1199.3 604.3" fill="none" stroke="#2a2aff" stroke-width="1.15" stroke-linejoin="round"/>
 <g stroke="#000" stroke-width="1.15" fill="none">
  <path d="M184.5 110 V819.5 M179 814.5 H1202"/>
  <path d="M179 115.5 H187 M179 290.3 H187 M179 465 H187 M179 639.8 H187"/>
  <path d="M387.5 812 V819.5 M591.5 812 V819.5 M794.5 812 V819.5 M998.5 812 V819.5 M1201.5 812 V819.5"/>
 </g>
</svg>
<div class="abs ax" style="left:100px;top:109.6px;width:74.2px;text-align:right">0.0</div>
<div class="abs ax" style="left:100px;top:284.4px;width:74.2px;text-align:right">-600.0</div>
<div class="abs ax" style="left:100px;top:459.1px;width:74.2px;text-align:right">-1200.0</div>
<div class="abs ax" style="left:100px;top:633.8px;width:74.2px;text-align:right">-1800.0</div>
<div class="abs ax" style="left:100px;top:808.6px;width:74.2px;text-align:right">-2400.0</div>
<div class="abs ax" style="left:160.5px;top:818.0px">304232</div>
<div class="abs ax" style="left:363.5px;top:818.0px">304332</div>
<div class="abs ax" style="left:567.5px;top:818.0px">304432</div>
<div class="abs ax" style="left:770.5px;top:818.0px">304532</div>
<div class="abs ax" style="left:974.5px;top:818.0px">304632</div>
<div class="abs ax" style="left:1177.5px;top:818.0px;width:44px;overflow:hidden">304732</div>
<!-- bottom controls -->
<div class="abs" style="left:109px;top:865px;width:114px;height:33px;background:linear-gradient(#fdfdfd,#f4f4f3);border-top:1px solid #c4c3bf;border-bottom:2px solid #b9b8b4;border-right:1px solid #cfcecb;border-radius:0 4px 4px 0"></div>
<div class="abs gtxt" style="left:119px;top:872px;line-height:18px;letter-spacing:.33px">115200 baud</div>
<div class="abs" style="left:224px;top:865px;width:32px;height:32px;background:linear-gradient(#fcfcfc,#ececea);border:1px solid #b8b7b3;border-radius:5px"></div>
<svg class="abs" style="left:224px;top:865px" width="32" height="32"><path d="M11.5 13.5 L16 18 L20.5 13.5" fill="none" stroke="#3c3c3c" stroke-width="2"/></svg>
<div class="abs" style="left:262px;top:863px;width:337px;height:37px;background:linear-gradient(#f6f6f5,#fbfbfb 30%);border:1.5px solid #a9a8a4;border-radius:5px"></div>
<div class="abs" style="left:605px;top:865px;width:53px;height:33px;background:linear-gradient(#fcfcfc,#ececea);border:1px solid #b8b7b3;border-radius:5px"></div>
<div class="abs gtxt" style="left:614px;top:872px;line-height:18px;letter-spacing:.6px">Send</div>
<div class="abs" style="left:1056px;top:865px;width:128px;height:33px;background:linear-gradient(#fdfdfd,#f4f4f3);border-top:1px solid #c4c3bf;border-bottom:2px solid #b9b8b4;border-right:1px solid #cfcecb;border-radius:0 4px 4px 0"></div>
<div class="abs gtxt" style="left:1066px;top:872px;line-height:18px;letter-spacing:.58px">No line ending</div>
<div class="abs" style="left:1184px;top:865px;width:32px;height:32px;background:linear-gradient(#fcfcfc,#ececea);border:1px solid #b8b7b3;border-radius:5px"></div>
<svg class="abs" style="left:1184px;top:865px" width="32" height="32"><path d="M11.5 13.5 L16 18 L20.5 13.5" fill="none" stroke="#3c3c3c" stroke-width="2"/></svg>

<!-- ================= ARDUINO WINDOW ================= -->
<div id="ard" class="abs win">
 <div class="abs title">uecg_oled_lib | Arduino 1.8.13</div>
 <svg class="abs" style="left:542px;top:0" width="70" height="30" viewBox="1767 102 70 30">
  <defs><linearGradient id="gB1" x1="0" y1="0" x2="0" y2="1"><stop offset="0" stop-color="#7a7871"/><stop offset="1" stop-color="#5a5852"/></linearGradient>
  <linearGradient id="gB2" x1="0" y1="0" x2="0" y2="1"><stop offset="0" stop-color="#f37a50"/><stop offset="1" stop-color="#d9502b"/></linearGradient></defs>
  <g stroke="#33322e" stroke-width="1"><circle cx="1782.9" cy="116.9" r="7.8" fill="url(#gB1)"/><circle cx="1802.9" cy="116.9" r="7.8" fill="url(#gB1)"/><circle cx="1822.9" cy="116.9" r="7.8" fill="url(#gB2)"/></g>
  <g fill="none" stroke="#3a3935" stroke-width="1.1"><path d="M1778.9 117.4 H1786.9"/><rect x="1799.4" y="113.4" width="7" height="7"/></g>
  <path d="M1820.1 114.1 L1825.7 119.7 M1825.7 114.1 L1820.1 119.7" stroke="#4a2416" stroke-width="1.3" fill="none"/>
 </svg>
 <div id="menubar" class="abs"><span style="left:5px"><u>F</u>ile</span><span style="left:38px"><u>E</u>dit</span><span style="left:73px"><u>S</u>ketch</span><span style="left:130px"><u>T</u>ools</span><span style="left:177px"><u>H</u>elp</span></div>
 <div id="toolbar" class="abs">
  <svg class="abs" style="left:0;top:0" width="612" height="40" viewBox="0 0 612 40">
   <g fill="#4db7bb">
    <circle cx="19.5" cy="20.4" r="14.9"/><circle cx="52.4" cy="20.4" r="14.9"/>
    <rect x="78.3" y="7.3" width="26.3" height="26"/><rect x="111.4" y="7.3" width="26.3" height="26"/><rect x="144.4" y="7.3" width="26.3" height="26"/>
    <rect x="568.3" y="7.3" width="26.4" height="26.3"/>
   </g>
   <g fill="#006468" stroke="none" transform="translate(1,0)">
    <path d="M12.3 21.0 L17.2 25.9 L24.7 15.9" fill="none" stroke="#006468" stroke-width="2.9"/>
    <path d="M46.1 19.1 H51.2 V14.9 L57.3 20.9 L51.2 27 V23 H46.1 Z"/>
    <path d="M84 12.2 H92.2 L97 17 V28.2 H84 Z M85.6 14 V26.6 H95.4 V18.6 H90.6 V14 Z" fill-rule="evenodd"/>
    <path d="M86.3 15.6 h1.3 v1.3 h-1.3z M88.4 15.6 h1.3 v1.3 h-1.3z M86.3 18 h1.3 v1.3 h-1.3z M88.4 18 h1.3 v1.3 h-1.3z M86.3 20.4 h1.3 v1.3 h-1.3z M88.4 20.4 h1.3 v1.3 h-1.3z M91.4 20.4 h1.3 v1.3 h-1.3z M93.5 20.4 h1.3 v1.3 h-1.3z M86.3 22.8 h1.3 v1.3 h-1.3z M88.4 22.8 h1.3 v1.3 h-1.3z M91.4 22.8 h1.3 v1.3 h-1.3z M93.5 22.8 h1.3 v1.3 h-1.3z M86.3 25 h1.3 v1 h-1.3z M88.4 25 h1.3 v1 h-1.3z M91.4 25 h1.3 v1 h-1.3z M93.5 25 h1.3 v1 h-1.3z" opacity=".85"/>
    <path d="M117 18.8 L123.4 12 L129.9 18.8 H125.4 V23 H121.6 V18.8 Z"/>
    <path d="M116.6 27.3 h1.3 v1.4 h-1.3z M118.9 27.3 h1.3 v1.4 h-1.3z M121.2 27.3 h1.3 v1.4 h-1.3z M123.5 27.3 h1.3 v1.4 h-1.3z M125.8 27.3 h1.3 v1.4 h-1.3z M128.1 27.3 h1.3 v1.4 h-1.3z" opacity=".8"/>
    <path d="M154.5 12 H158.4 V17.3 H162.7 L156.4 23.3 L150 17.3 H154.5 Z"/>
    <path d="M149.4 27.3 h1.3 v1.4 h-1.3z M151.7 27.3 h1.3 v1.4 h-1.3z M154 27.3 h1.3 v1.4 h-1.3z M156.3 27.3 h1.3 v1.4 h-1.3z M158.6 27.3 h1.3 v1.4 h-1.3z M160.9 27.3 h1.3 v1.4 h-1.3z" opacity=".8"/>
   </g><g fill="#006468" stroke="none">
    <circle cx="580.8" cy="20" r="5" fill="none" stroke="#006468" stroke-width="2.4"/>
    <circle cx="580.8" cy="20" r="1.6"/>
    <path d="M577.4 23.2 L573.6 26.8" stroke="#006468" stroke-width="3" fill="none"/>
    <path d="M572.2 19.7 h1.2 v1 h-1.2z M587.6 19.7 h1.2 v1 h-1.2z M589.6 19.7 h1.2 v1 h-1.2z M591.4 19.7 h.9 v1 h-.9z" opacity=".85"/>
   </g>
  </svg>
 </div>
 <div id="tabs" class="abs">
  <div id="tab" class="abs">uecg_oled_lib</div>
  <div class="abs" style="left:565px;top:10px;width:21px;height:21px;background:#4db7bb"></div>
  <svg class="abs" style="left:565px;top:10px" width="21" height="21"><path d="M4.6 7.2 H16.6 L10.6 13.6 Z" fill="#007479"/></svg>
 </div>
 <div id="editor" class="abs">
  <div class="abs" style="left:15.3px;top:182px;width:1.6px;height:14px;background:#000"></div>
  <div id="code" class="abs">
<div class="ln"><span class="t">uint8_t</span> ecg_screen[128];</div>
<div class="ln"><span class="t">int</span> ecg_screen_len = 128;</div>
<div class="ln"><span class="t">float</span> ecg_avg = 0;</div>
<div class="ln"><span class="t">float</span> ecg_max = 1;</div>
<div class="ln"><span class="t">float</span> ecg_min = -1;</div>
<div class="ln"><span class="t">int</span> ecg_size = 40;</div>
<div class="ln"></div>
<div class="ln"><span class="t">int</span> displ_phase = 0;</div>
<div class="ln"></div>
<div class="ln"><span class="t">void</span> <span class="k">loop</span>()</div>
<div class="ln">{</div>
<div class="ln">  uECG.<span class="f">run</span>();</div>
<div class="ln">  <span class="t">uint32_t</span> data_count = uECG.<span class="f">getDataCount</span>();</div>
<div class="ln">  <span class="t">int</span> new_data = data_count - prev_data_count;</div>
<div class="ln">  prev_data_count = data_count;</div>
<div class="ln">  <span class="k">if</span>(new_data &gt; 0)</div>
<div class="ln">  {</div>
<div class="ln">    <span class="t">uint32_t</span> ms = <span class="f">millis</span>();</div>
<div class="ln">    <span class="t">int16_t</span> ecg_data[8];</div>
<div class="ln">    uECG.<span class="f">getECG</span>(ecg_data, new_data);</div>
<div class="ln">    <span class="k">for</span>(<span class="t">int</span> x = 0; x &lt; new_data; x++)</div>
<div class="ln">      <span class="s">Serial</span>.<span class="f">println</span>(ecg_data[x]);</div>
<div class="ln"></div>
<div class="ln">    <span class="k">for</span>(<span class="t">int</span> x = new_data; x &lt; ecg_screen_len; x++)</div>
<div class="ln">      ecg_screen[x-new_data] = ecg_screen[x];</div>
<div class="ln">    <span class="k">for</span>(<span class="t">int</span> x = 0; x &lt; new_data; x++)</div>
<div class="ln">    {</div>
<div class="ln">      ecg_avg *= 0.99;</div>
<div class="ln">      ecg_avg += 0.01*ecg_data[x];</div>
<div class="ln">      ecg_max = ecg_max*0.995 + ecg_avg*0.005;</div>
<div class="ln">      ecg_min = ecg_min*0.995 + ecg_avg*0.005;</div>
  </div>
 </div>

 <!-- scrollbars -->
 <div class="abs" style="left:0;top:681px;width:612px;height:25px;background:#fff"></div>
 <div class="abs" style="left:6px;top:681px;width:587px;height:20px;background:#f0efed"></div>
 <div class="abs" style="left:0;top:700px;width:612px;height:3px;background:#f0efed"></div>
 <div class="abs" style="left:0;top:703px;width:612px;height:1px;background:#b2b1ad"></div>
 <div class="abs" style="left:0;top:704px;width:612px;height:2px;background:#f6f5f3"></div>
 <div class="abs" style="left:593px;top:134px;width:19px;height:547px;background:#f0f0f0"></div>
 <svg class="abs" style="left:0;top:134px" width="612" height="572" viewBox="1225 236 612 572">
  <g>
   <rect x="1822.2" y="237.5" width="13.6" height="544.5" rx="3" fill="#d6d6d6" stroke="#9c9c9c" stroke-width="1"/>
   <rect x="1822.2" y="422" width="13.6" height="133" fill="#e8764a"/>
   <rect x="1822.2" y="237.5" width="13.6" height="12.5" rx="3.5" fill="#f6f6f6" stroke="#8a8a8a" stroke-width="1"/>
   <rect x="1822.2" y="768.5" width="13.6" height="13" rx="3.5" fill="#f6f6f6" stroke="#8a8a8a" stroke-width="1"/>
   <path d="M1825.4 246 L1829 242.2 L1832.6 246 M1825.4 773.4 L1829 777.2 L1832.6 773.4" fill="none" stroke="#333" stroke-width="1.3"/>
   <rect x="1231.8" y="787.2" width="585.4" height="13.6" rx="3" fill="#d6d6d6" stroke="#9c9c9c" stroke-width="1"/>
   <rect x="1246" y="787.2" width="453" height="13.6" fill="#e8764a"/>
   <rect x="1231.8" y="787.2" width="13.4" height="13.6" rx="3.5" fill="#f6f6f6" stroke="#8a8a8a" stroke-width="1"/>
   <rect x="1803.4" y="787.2" width="13.8" height="13.6" rx="3.5" fill="#f6f6f6" stroke="#8a8a8a" stroke-width="1"/>
   <path d="M1240.3 790.4 L1236.6 794 L1240.3 797.6 M1808.5 790.4 L1812.2 794 L1808.5 797.6" fill="none" stroke="#333" stroke-width="1.3"/>
  </g>
 </svg>
 <!-- status / console -->
 <div class="abs" style="left:0;top:706px;width:612px;height:40px;background:#17a1a5"></div>
 <div class="abs" style="left:0;top:746px;width:612px;height:73px;background:#000;border:1px solid #fff"></div>
 <div class="abs" style="left:0;top:818px;width:612px;height:26px;background:#006468;color:#fff;font-size:12.5px;line-height:30px"><span class="abs" style="left:7px;letter-spacing:.6px">50</span><span class="abs" style="right:25px;white-space:pre;letter-spacing:.55px">Arduino Uno on /dev/ttyACM0</span></div>
</div>

<!-- ================= TOP BAR / DOCK ================= -->
<div id="dock" class="abs"></div>

<!-- dock icons -->
<svg class="abs" style="left:0;top:27px" width="67" height="1053" viewBox="0 27 67 1053">
 <defs>
  <linearGradient id="gHelp" x1="0" y1="0" x2="0" y2="1"><stop offset="0" stop-color="#78a6d6"/><stop offset=".5" stop-color="#4a85bd"/><stop offset="1" stop-color="#2d6ea3"/></linearGradient>
  <linearGradient id="gQb" x1="0.15" y1="0.1" x2="0.8" y2="0.95"><stop offset="0" stop-color="#72b0f4"/><stop offset=".5" stop-color="#4a86dc"/><stop offset="1" stop-color="#2a58b0"/></linearGradient>
  <radialGradient id="gArd" cx=".5" cy=".45" r=".55"><stop offset="0" stop-color="#12b4bc"/><stop offset=".7" stop-color="#04969c"/><stop offset="1" stop-color="#00848a"/></radialGradient>
  <linearGradient id="gCab" x1="0" y1="0" x2="0" y2="1"><stop offset="0" stop-color="#c6c6c6"/><stop offset="1" stop-color="#8a8a8a"/></linearGradient>
  <linearGradient id="gCabTop" x1="0" y1="0" x2="0" y2="1"><stop offset="0" stop-color="#e4e4e4"/><stop offset="1" stop-color="#b4b4b4"/></linearGradient>
  <linearGradient id="gPage" x1="0" y1="0" x2="0" y2="1"><stop offset="0" stop-color="#f6f6f6"/><stop offset="1" stop-color="#d4d4d4"/></linearGradient>
  <linearGradient id="gBag" x1="0" y1="0" x2="0" y2="1"><stop offset="0" stop-color="#e8904e"/><stop offset=".55" stop-color="#ea6c2a"/><stop offset=".72" stop-color="#ea6c2a"/><stop offset=".73" stop-color="#ee7c40"/><stop offset="1" stop-color="#ee7e42"/></linearGradient>
  <clipPath id="cChrome"><circle cx="33.1" cy="58.9" r="22.2"/></clipPath>
 </defs>
 <!-- chrome -->
 <g clip-path="url(#cChrome)">
  <path d="M24.2 64.05 L4.2 29.4 L4 20 H70 V48.6 H33.1 L33.1 58.9 Z" fill="#db4a3a"/>
  <path d="M33.1 48.6 H70 V100 H22 L42 64.05 L33.1 58.9 Z" fill="#ffcd42"/>
  <path d="M42 64.05 L22 98.7 L0 100 V20 L4.2 29.4 L24.2 64.05 L33.1 58.9 Z" fill="#11a05b"/>
  <path d="M14 46.5 L24.2 64.05 L29 52 Z" fill="#a8301f" opacity=".16"/>
  <path d="M33.1 48.6 H53 L42 64.05 Z" fill="#e0a020" opacity=".15"/>
  <path d="M42 64.05 L32 81.3 L26 66 Z" fill="#0a6e3c" opacity=".15"/>
 </g>
 <circle cx="33.1" cy="58.9" r="10.3" fill="#f6f6f6"/><circle cx="33.1" cy="58.9" r="8.3" fill="#4285f4"/>
 <!-- files cabinet -->
 <path d="M14 101 H52 L54 106.5 V141 H12 V106.5 Z" fill="#9c9c9c"/>
 <path d="M14 101 H52 L54 106.8 H12 Z" fill="url(#gCabTop)"/>
 <rect x="15" y="109" width="36" height="10" fill="#1e1e1e"/>
 <rect x="16" y="110.3" width="34" height="8.5" fill="#e87a22"/>
 <rect x="16" y="112.2" width="33" height="1.2" fill="#fbe9d4"/><rect x="16" y="113.6" width="34" height="5" fill="#f2a24a"/>
 <path d="M14 118.6 H52 V143.6 H14 Z" fill="url(#gCab)"/>
 <path d="M14 118.6 H52 V120 H14 Z" fill="#d6d6d6"/>
 <rect x="26" y="127" width="14" height="11" rx="2" fill="#c4c4c4"/><rect x="28.3" y="129.6" width="9.4" height="4.8" rx="1" fill="#f0f0f0" stroke="#6a6a6a" stroke-width=".9"/>
 <!-- libreoffice writer -->
 <path d="M15 163 H35.5 L53 180.5 V209 Q53 211 51 211 H15 Q13 211 13 209 V165 Q13 163 15 163 Z" fill="#0e5b8c"/>
 <path d="M16.2 166 H34.6 L50 181.5 V207.8 H16.2 Z" fill="url(#gPage)"/>
 <path d="M41.5 163.2 H52 Q53 163.2 53 164.2 V175 Z" fill="#0e6aa4"/>
 <g fill="#0d4a80"><rect x="21" y="181" width="8" height="1.9"/><rect x="21" y="185" width="8" height="1.9"/><rect x="21" y="189" width="8" height="1.9"/><rect x="21" y="193" width="24" height="1.9"/><rect x="21" y="197" width="24" height="1.9"/><rect x="21" y="201" width="18" height="1.9"/></g>
 <rect x="31" y="181" width="14" height="10" fill="#7ec3f0" stroke="#0d5a94" stroke-width=".8"/><path d="M31.6 190.4 L35.5 183.6 L38.2 187.8 L40.4 185.6 L44.4 190.4 Z" fill="#3a3a3a"/><circle cx="43" cy="183" r="1.3" fill="#f2c22a"/>
 <!-- ubuntu software -->
 <path d="M27.2 242 V233.4 Q27.2 230.4 30.2 230.4 H36.2 Q39.2 230.4 39.2 233.4 V242" fill="none" stroke="#dc5c22" stroke-width="3"/>
 <path d="M14.5 235 H51.5 L54 239 H12 Z" fill="#d8541e"/>
 <rect x="12" y="238.6" width="42" height="33.2" fill="url(#gBag)"/>
 <path d="M27.2 242.5 V237 M39.2 242.5 V237" stroke="#ea7036" stroke-width="3"/>
 <path d="M33.1 246.6 L24 264.8 H28.6 L33.1 254.4 L37.6 264.8 H42.2 Z" fill="#fff"/>
 <rect x="23.8" y="257" width="18.4" height="3.9" rx="1.9" fill="#fff"/><rect x="25.4" y="258.2" width="10.6" height="1.4" rx=".7" fill="#e4501c"/>
 <rect x="23" y="261" width="20" height="1" fill="#ea6c2a"/>
 <!-- help -->
 <ellipse cx="33.1" cy="334" rx="17" ry="3" fill="#000" opacity=".18"/>
 <circle cx="33.1" cy="315.7" r="19.9" fill="url(#gHelp)"/>
 <circle cx="33.1" cy="315.7" r="19.4" fill="none" stroke="#9cc0e4" stroke-opacity=".5" stroke-width=".8"/>
 <text x="33.2" y="330.2" font-family="Liberation Serif" font-weight="bold" font-size="37" fill="#fff" text-anchor="middle">?</text>
 <!-- qbittorrent -->
 <circle cx="33.1" cy="378.9" r="24" fill="#e8f2ff"/><circle cx="33.1" cy="378.9" r="23.2" fill="url(#gQb)"/>
 <text x="33.1" y="386.8" font-family="Liberation Sans" font-size="30.5" fill="#d4e8ff" text-anchor="middle" letter-spacing="-.6">qb</text>
 <!-- arduino (running / focused) -->
 <rect x="2.2" y="412" width="61.6" height="61.8" rx="3.5" fill="#fff" fill-opacity=".19"/>
 <circle cx="4.8" cy="434.7" r="2.9" fill="#e95420"/><circle cx="4.8" cy="443" r="2.9" fill="#e95420"/><circle cx="4.8" cy="451.4" r="2.9" fill="#e95420"/>
 <circle cx="33.1" cy="443.6" r="22.3" fill="#006a70" opacity=".5"/>
 <circle cx="33.1" cy="442.7" r="22.3" fill="url(#gArd)"/>
 <path d="M33.1 442.7 C30.6 438.2 28.2 436.3 24.6 436.3 C20.6 436.3 17.8 439.2 17.8 442.7 C17.8 446.2 20.6 449.1 24.6 449.1 C28.2 449.1 30.6 447.2 33.1 442.7 C35.6 438.2 38 436.3 41.6 436.3 C45.6 436.3 48.4 439.2 48.4 442.7 C48.4 446.2 45.6 449.1 41.6 449.1 C38 449.1 35.6 447.2 33.1 442.7 Z" fill="none" stroke="#fff" stroke-width="2.9"/>
 <path d="M22.2 442.7 H27 M39.3 442.7 H43.9 M41.6 440.4 V445" stroke="#fff" stroke-width="1.4" fill="none"/>
 <!-- show applications -->
 <g fill="#f2ecee"><circle cx="21" cy="1036" r="3.1"/><circle cx="33" cy="1036" r="3.1"/><circle cx="45" cy="1036" r="3.1"/><circle cx="21" cy="1048" r="3.1"/><circle cx="33" cy="1048" r="3.1"/><circle cx="45" cy="1048" r="3.1"/><circle cx="21" cy="1060" r="3.1"/><circle cx="33" cy="1060" r="3.1"/><circle cx="45" cy="1060" r="3.1"/></g>
</svg>
<div id="topbar" class="abs">
 <svg class="abs" style="left:0;top:0" width="1920" height="27" viewBox="0 0 1920 27">
  <circle cx="107.9" cy="12.9" r="7.7" fill="#0a9aa0"/>
  <path d="M107.9 12.9 C107 11.3 106.2 10.7 105 10.7 C103.6 10.7 102.7 11.7 102.7 12.9 C102.7 14.1 103.6 15.1 105 15.1 C106.2 15.1 107 14.5 107.9 12.9 C108.8 11.3 109.6 10.7 110.8 10.7 C112.2 10.7 113.1 11.7 113.1 12.9 C113.1 14.1 112.2 15.1 110.8 15.1 C109.6 15.1 108.8 14.5 107.9 12.9 Z" fill="none" stroke="#fff" stroke-width="1.1"/>
  <path d="M213.6 11 H222.6 L218.1 16 Z" fill="#fff"/>
  <circle cx="1030" cy="13.1" r="4" fill="#f2f0ee"/>
  <!-- cloud screenshot icon -->
  <path d="M1704.5 19 Q1702 19 1702 16.4 Q1702 13.6 1704.6 13 Q1704.4 8.2 1708.6 7.2 Q1711.8 6.4 1713.8 9 Q1716 7.6 1718 9 Q1720 10.4 1719.6 12.8 Q1724 13.2 1724 16.2 Q1724 19 1721.4 19 Z" fill="#4a90d9"/>
  <circle cx="1713" cy="14.2" r="3.6" fill="#e4ecf6"/><circle cx="1713" cy="14.2" r="1.7" fill="#4a78b8"/>
  <rect x="1706.4" y="8.8" width="2" height="2" fill="#eef4fb"/><path d="M1718.2 7 L1720.4 5.2" stroke="#9a5a4a" stroke-width="1"/>
  <path d="M1771.4 11 H1780.8 L1776.1 16 Z" fill="#fff"/>
  <!-- wifi -->
  <g fill="none" stroke="#fff" stroke-linecap="butt">
   <path d="M1814.2 11.2 Q1820.9 4.4 1827.6 11.2" stroke-width="1.5" stroke-opacity=".45"/>
   <path d="M1816.4 13.6 Q1820.9 9 1825.4 13.6" stroke-width="1.7"/>
   <path d="M1818.4 15.9 Q1820.9 13.3 1823.4 15.9" stroke-width="1.7"/>
  </g>
  <circle cx="1820.9" cy="18.2" r="1.9" fill="#fff"/>
  <!-- volume -->
  <path d="M1841 10.4 H1843.6 L1847.2 6.4 V19.6 L1843.6 15.6 H1841 Z" fill="#fff"/>
  <g fill="none" stroke="#fff" stroke-width="1.4">
   <path d="M1849.2 10 Q1851 13 1849.2 16"/><path d="M1851.4 8 Q1854.4 13 1851.4 18"/><path d="M1853.6 6 Q1857.6 13 1853.6 20" />
  </g>
  <!-- battery -->
  <path d="M1873.4 5.2 H1880.4 V7 H1882.8 V20.8 H1871 V7 H1873.4 Z M1872.8 8.8 V19 H1881 V8.8 Z" fill="#fff" fill-rule="evenodd"/>
  <rect x="1873.8" y="10" width="6.2" height="2" fill="#fff"/><rect x="1873.8" y="13" width="6.2" height="2" fill="#fff"/><rect x="1873.8" y="16" width="6.2" height="2" fill="#fff"/>
  <path d="M1895.2 11 H1904.8 L1900 16 Z" fill="#fff"/>
 </svg>

 <span class="abs" style="left:12px;top:1px;letter-spacing:.38px">Activities</span>
 <span class="abs" style="left:122px;top:1px;letter-spacing:.12px">Arduino IDE</span>
 <span class="abs" style="left:966px;top:1px;letter-spacing:-.25px">ср 18:38</span>
 <span class="abs" style="left:1748px;top:1px">en</span>
</div>
</body></html>
